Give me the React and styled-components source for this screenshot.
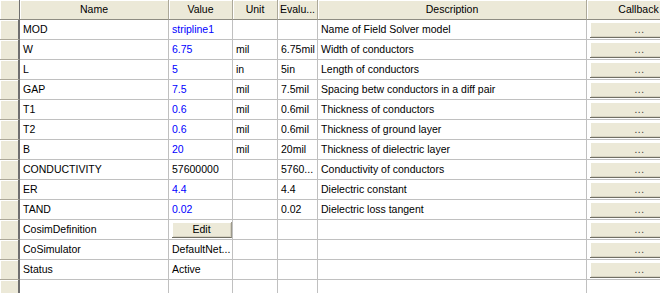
import React from "react";
import styled, { createGlobalStyle, css } from "styled-components";

const GlobalStyle = createGlobalStyle`
  html, body { margin: 0; padding: 0; background: #ffffff; overflow: hidden; }
  body { font-family: "Liberation Sans", Arial, sans-serif; font-size: 10.5px; color: #000; }
`;

const COLS = [
  { key: "name", label: "Name", width: 149 },
  { key: "value", label: "Value", width: 64 },
  { key: "unit", label: "Unit", width: 45 },
  { key: "evald", label: "Evalu...", width: 40 },
  { key: "desc", label: "Description", width: 269 },
  { key: "cb", label: "Callback", width: 104 },
];

const template = `20px ${COLS.map((c) => c.width + "px").join(" ")}`;

const Viewport = styled.div`
  width: 660px;
  height: 293px;
  overflow: hidden;
  background: #ffffff;
`;

const Grid = styled.div`
  width: 691px;
  display: flex;
  flex-direction: column;
`;

const Row = styled.div`
  display: grid;
  grid-template-columns: ${template};
  height: 20px;
`;

const HeaderRow = styled(Row)`
  background: #ece9d8;
`;

const HeaderCell = styled.div`
  box-sizing: border-box;
  height: 20px;
  background: #ece9d8;
  border-right: 1px solid #aca899;
  border-bottom: 1px solid #8e8c82;
  box-shadow: inset 1px 1px 0 #ffffff;
  padding: 0 1px;
  line-height: 19px;
  text-align: center;
  white-space: nowrap;
  overflow: hidden;
`;

const Corner = styled(HeaderCell)`
  border-right: 1px solid #6f6f6f;
`;

const RowHead = styled.div`
  box-sizing: border-box;
  height: 20px;
  background: #ece9d8;
  border-right: 2px solid #6f6f6f;
  border-bottom: 1px solid #aca899;
  box-shadow: inset 1px 1px 0 #ffffff;
`;

const Cell = styled.div`
  box-sizing: border-box;
  height: 20px;
  border-right: 1px solid #c0c0c0;
  border-bottom: 1px solid #c0c0c0;
  padding: 0 0 0 3px;
  line-height: 19px;
  white-space: nowrap;
  overflow: hidden;
  color: ${(p) => (p.$blue ? "#0000ff" : "#000000")};
  ${(p) =>
    p.$btn &&
    css`
      padding: 2px 0 1px 3px;
      display: flex;
    `}
`;

const Button = styled.div`
  flex: 1;
  box-sizing: border-box;
  height: 16px;
  background: #ece9d8;
  border-right: 1px solid #9d9a8c;
  border-bottom: 1px solid #716f64;
  box-shadow: inset 1px 1px 0 #ffffff, inset -1px -1px 0 #d6d2c2;
  text-align: center;
  line-height: 15px;
  color: #000;
`;

const Dots = styled(Button)`
  color: #333;
  font-size: 10px;
  letter-spacing: 0.5px;
`;

const rows = [
  ["MOD", "stripline1", true, "", "", "Name of Field Solver model"],
  ["W", "6.75", true, "mil", "6.75mil", "Width of conductors"],
  ["L", "5", true, "in", "5in", "Length of conductors"],
  ["GAP", "7.5", true, "mil", "7.5mil", "Spacing betw conductors in a diff pair"],
  ["T1", "0.6", true, "mil", "0.6mil", "Thickness of conductors"],
  ["T2", "0.6", true, "mil", "0.6mil", "Thickness of ground layer"],
  ["B", "20", true, "mil", "20mil", "Thickness of dielectric layer"],
  ["CONDUCTIVITY", "57600000", false, "", "5760...", "Conductivity of conductors"],
  ["ER", "4.4", true, "", "4.4", "Dielectric constant"],
  ["TAND", "0.02", true, "", "0.02", "Dielectric loss tangent"],
  ["CosimDefinition", "@edit", false, "", "", ""],
  ["CoSimulator", "DefaultNet...", false, "", "", ""],
  ["Status", "Active", false, "", "", ""],
];

export default function App() {
  return (
    <>
      <GlobalStyle />
      <Viewport>
        <Grid>
          <HeaderRow>
            <Corner />
            {COLS.map((c) => (
              <HeaderCell key={c.key}>{c.label}</HeaderCell>
            ))}
          </HeaderRow>
          {rows.map(([name, value, blue, unit, evald, desc]) => (
            <Row key={name}>
              <RowHead />
              <Cell>{name}</Cell>
              {value === "@edit" ? (
                <Cell $btn>
                  <Button>Edit</Button>
                </Cell>
              ) : (
                <Cell $blue={blue}>{value}</Cell>
              )}
              <Cell>{unit}</Cell>
              <Cell>{evald}</Cell>
              <Cell>{desc}</Cell>
              <Cell $btn>
                <Dots>...</Dots>
              </Cell>
            </Row>
          ))}
          <Row>
            <RowHead />
            <Cell />
            <Cell />
            <Cell />
            <Cell />
            <Cell />
            <Cell />
          </Row>
        </Grid>
      </Viewport>
    </>
  );
}
